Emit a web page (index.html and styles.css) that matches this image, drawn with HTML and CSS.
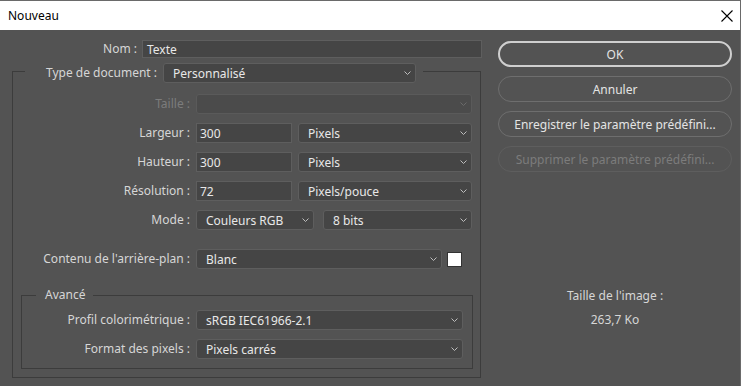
FILE: index.html
```html
<!DOCTYPE html>
<html lang="fr">
<head>
    <meta charset="UTF-8">
    <title>Nouveau</title>
    <link rel="stylesheet" href="styles.css">
</head>
<body>

<div class="window">
    <div class="titlebar">
        <span class="title">Nouveau</span>
        <svg class="close" width="12" height="12" viewBox="0 0 12 12">
            <path d="M0.5 0.5 L11.5 11.5 M11.5 0.5 L0.5 11.5" stroke="#000" stroke-width="1.1" fill="none"/>
        </svg>
    </div>

    <div class="dialog">
        <div class="form">
            <div class="name-row">
                <label>Nom :</label>
                <div class="field input">Texte</div>
            </div>

            <fieldset class="group">
                <legend class="doc-legend">
                    <label>Type de document :</label>
                    <div class="field select doc-select">
                        <span>Personnalisé</span>
                        <svg class="chev" width="7" height="4" viewBox="0 0 7 4"><path d="M0.5 0.5 L3.5 3.5 L6.5 0.5" stroke="#bdbdbd" fill="none"/></svg>
                    </div>
                </legend>

                <div class="rows">
                    <div class="row disabled">
                        <label>Taille :</label>
                        <div class="field select">
                            <span></span>
                            <svg class="chev" width="7" height="4" viewBox="0 0 7 4"><path d="M0.5 0.5 L3.5 3.5 L6.5 0.5" stroke="#6a6a6a" fill="none"/></svg>
                        </div>
                    </div>
                    <div class="row">
                        <label>Largeur :</label>
                        <div class="pair">
                            <div class="field input num">300</div>
                            <div class="field select">
                                <span>Pixels</span>
                                <svg class="chev" width="7" height="4" viewBox="0 0 7 4"><path d="M0.5 0.5 L3.5 3.5 L6.5 0.5" stroke="#bdbdbd" fill="none"/></svg>
                            </div>
                        </div>
                    </div>
                    <div class="row">
                        <label>Hauteur :</label>
                        <div class="pair">
                            <div class="field input num">300</div>
                            <div class="field select">
                                <span>Pixels</span>
                                <svg class="chev" width="7" height="4" viewBox="0 0 7 4"><path d="M0.5 0.5 L3.5 3.5 L6.5 0.5" stroke="#bdbdbd" fill="none"/></svg>
                            </div>
                        </div>
                    </div>
                    <div class="row">
                        <label>Résolution :</label>
                        <div class="pair">
                            <div class="field input num">72</div>
                            <div class="field select">
                                <span>Pixels/pouce</span>
                                <svg class="chev" width="7" height="4" viewBox="0 0 7 4"><path d="M0.5 0.5 L3.5 3.5 L6.5 0.5" stroke="#bdbdbd" fill="none"/></svg>
                            </div>
                        </div>
                    </div>
                    <div class="row">
                        <label>Mode :</label>
                        <div class="pair mode">
                            <div class="field select mode-select">
                                <span>Couleurs RGB</span>
                                <svg class="chev" width="7" height="4" viewBox="0 0 7 4"><path d="M0.5 0.5 L3.5 3.5 L6.5 0.5" stroke="#bdbdbd" fill="none"/></svg>
                            </div>
                            <div class="field select">
                                <span>8 bits</span>
                                <svg class="chev" width="7" height="4" viewBox="0 0 7 4"><path d="M0.5 0.5 L3.5 3.5 L6.5 0.5" stroke="#bdbdbd" fill="none"/></svg>
                            </div>
                        </div>
                    </div>
                    <div class="row background-row">
                        <label>Contenu de l'arrière-plan :</label>
                        <div class="pair">
                            <div class="field select bg-select">
                                <span>Blanc</span>
                                <svg class="chev" width="7" height="4" viewBox="0 0 7 4"><path d="M0.5 0.5 L3.5 3.5 L6.5 0.5" stroke="#bdbdbd" fill="none"/></svg>
                            </div>
                            <div class="swatch"></div>
                        </div>
                    </div>
                </div>

                <fieldset class="group advanced">
                    <legend class="adv-legend">Avancé</legend>
                    <div class="rows">
                        <div class="row">
                            <label>Profil colorimétrique :</label>
                            <div class="field select">
                                <span>sRGB IEC61966-2.1</span>
                                <svg class="chev" width="7" height="4" viewBox="0 0 7 4"><path d="M0.5 0.5 L3.5 3.5 L6.5 0.5" stroke="#bdbdbd" fill="none"/></svg>
                            </div>
                        </div>
                        <div class="row">
                            <label>Format des pixels :</label>
                            <div class="field select">
                                <span>Pixels carrés</span>
                                <svg class="chev" width="7" height="4" viewBox="0 0 7 4"><path d="M0.5 0.5 L3.5 3.5 L6.5 0.5" stroke="#bdbdbd" fill="none"/></svg>
                            </div>
                        </div>
                    </div>
                </fieldset>
            </fieldset>
        </div>

        <div class="side">
            <div class="buttons">
                <button class="btn primary">OK</button>
                <button class="btn">Annuler</button>
                <button class="btn">Enregistrer le paramètre prédéfini...</button>
                <button class="btn" disabled>Supprimer le paramètre prédéfini...</button>
            </div>
            <div class="info">
                <span>Taille de l'image :</span>
                <span>263,7 Ko</span>
            </div>
        </div>
    </div>
</div>

</body>
</html>
```

FILE: styles.css
```css
body {
    margin: 0;
    background-color: #535353;
    font-family: "Noto Sans", "Open Sans", sans-serif;
    font-size: 12px;
    color: #d6d6d6;
}

.window {
    width: 741px;
    height: 386px;
    box-sizing: border-box;
    border-top: 1px solid #6a6a6a;
    border-right: 1px solid #6a6a6a;
    overflow: hidden;
}

.titlebar {
    height: 29px;
    background-color: #fff;
    display: flex;
    align-items: center;
    justify-content: space-between;
    padding: 0 7px 0 8px;
}

.title {
    color: #000;
}

.dialog {
    display: flex;
    gap: 16px;
    padding: 10px 0 0 12px;
}

.form {
    width: 470px;
}

label {
    text-align: right;
    white-space: nowrap;
    line-height: 20px;
}

.field {
    box-sizing: border-box;
    height: 20px;
    background-color: #454545;
    border: 1px solid #5e5e5e;
    color: #e8e8e8;
    display: flex;
    align-items: center;
    white-space: nowrap;
}

.input {
    padding-left: 4px;
}

.input.num {
    padding-left: 3px;
}

.select {
    border-radius: 3px;
    padding: 0 4px 0 9px;
    justify-content: space-between;
}

.name-row {
    display: grid;
    grid-template-columns: 125px 340px;
    gap: 5px;
}

.name-row .field {
    height: 18px;
}

.name-row label {
    line-height: 18px;
}

.group {
    margin: 5px 0 0;
    padding: 0 8px 8px 0;
    border: 1px solid #3c3c3c;
    width: 469px;
    box-sizing: border-box;
    min-width: 0;
}

.doc-legend {
    margin-left: 12px;
    padding: 0 7px;
    height: 16px;
    display: flex;
    align-items: flex-start;
    gap: 6px;
}

.doc-legend label {
    width: 125px;
}

.doc-select {
    width: 253px;
}

.rows {
    display: flex;
    flex-direction: column;
    gap: 9px;
    margin-top: 15px;
}

.row {
    display: grid;
    grid-template-columns: 177px 1fr;
    gap: 6px;
}

.row.disabled label {
    color: #7c7c7c;
}

.row.disabled .field {
    background-color: #4b4b4b;
    border-color: #5a5a5a;
}

.pair {
    display: flex;
    gap: 6px;
}

.pair .num {
    width: 96px;
}

.pair .select {
    flex: 1;
}

.pair.mode {
    gap: 9px;
}

.pair .mode-select {
    flex: none;
    width: 118px;
}

.background-row {
    margin-top: 10px;
}

.pair .bg-select {
    flex: none;
    width: 246px;
}

.swatch {
    width: 15px;
    height: 15px;
    box-sizing: border-box;
    background-color: #fff;
    border: 1px solid #333;
    margin: 3px 0 0 -1px;
}

.advanced {
    margin: 18px 0 0 8px;
    width: 452px;
    padding: 0 9px 9px 0;
}

.adv-legend {
    margin-left: 14px;
    padding: 0 8px 0 9px;
    line-height: 16px;
}

.advanced .rows {
    margin-top: 7px;
}

.advanced .row {
    grid-template-columns: 168px 1fr;
}

.side {
    width: 234px;
    padding: 1px 0 0 0;
}

.buttons {
    display: flex;
    flex-direction: column;
    gap: 9px;
}

.btn {
    height: 26px;
    border: 1px solid #6e6e6e;
    border-radius: 13px;
    background-color: transparent;
    color: #e4e4e4;
    font-family: inherit;
    font-size: 12px;
    padding: 0;
}

.btn.primary {
    border: 2px solid #cfcfcf;
}

.btn:disabled {
    border-color: #5e5e5e;
    color: #7c7c7c;
}

.info {
    margin-top: 116px;
    display: flex;
    flex-direction: column;
    align-items: center;
    gap: 8px;
    line-height: 16px;
}
```
